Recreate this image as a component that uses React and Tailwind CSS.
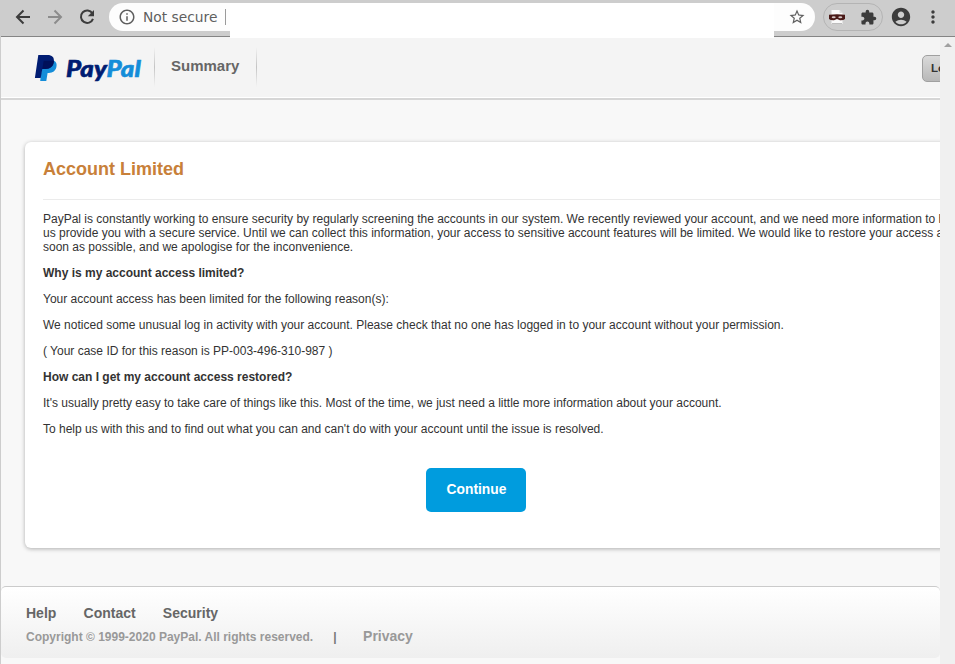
import {
  MdInfoOutline,
  MdStarBorder,
  MdExtension,
  MdAccountCircle,
  MdMoreVert,
} from "react-icons/md";

const details = [
  { text: "Why is my account access limited?", bold: true },
  { text: "Your account access has been limited for the following reason(s):" },
  {
    text: "We noticed some unusual log in activity with your account. Please check that no one has logged in to your account without your permission.",
  },
  { text: "( Your case ID for this reason is PP-003-496-310-987 )" },
  { text: "How can I get my account access restored?", bold: true },
  {
    text: "It's usually pretty easy to take care of things like this. Most of the time, we just need a little more information about your account.",
  },
  {
    text: "To help us with this and to find out what you can and can't do with your account until the issue is resolved.",
  },
];

const NavIcon = ({ d, className }) => (
  <svg
    width="16"
    height="16"
    viewBox="0 0 16 16"
    fill="none"
    stroke="currentColor"
    strokeWidth="2"
    className={`block shrink-0 ${className}`}
  >
    <path d={d} />
  </svg>
);

const MaskIcon = () => (
  <svg width="16" height="16" viewBox="0 0 16 16" className="block">
    <path d="M2.500 1h8L13.500 4v11h-11z" fill="#fafafa" />
    <path d="M10.500 1v3h3z" fill="#dcdcdc" />
    <path d="M3 14h10v1H3z" fill="#bdbdbd" />
    <path
      d="M0 5.700Q8 4.800 16 5.700V10Q14.500 11.500 11 11.300L8 10 5 11.300Q1.500 11.500 0 10z"
      fill="#4a1a18"
    />
    <ellipse cx="4.700" cy="8.300" rx="2" ry="1" fill="#d8c8c6" />
    <ellipse cx="11.300" cy="8.300" rx="2" ry="1" fill="#d8c8c6" />
  </svg>
);

const Logo = () => (
  <div className="flex w-[153px] shrink-0 items-start pl-[33px] pt-[17px]">
    <svg width="24" height="28" viewBox="0 0 24 28" className="block shrink-0">
      <path
        d="M8.500 6.500h11.300C22.500 8 23 10.300 22.400 13c-.9 4-3.600 5.900-7.500 5.900h-1.300l-1.300 8H6.200z"
        fill="#148dd9"
      />
      <path
        d="M4.300 1h9.200c4.500 0 7 2.200 6.300 6.500-.8 5-3.900 7.400-8.700 7.400H8.300L6.700 24H.9z"
        fill="#001c72"
      />
      <path d="M9.700 6.700h10.200c0 5.300-3.300 8.200-8.800 8.200H8.300z" fill="#00105a" />
    </svg>
    <span className="ml-[7.500px] origin-left scale-x-[1.12] font-['Lato',sans-serif] text-[23px] leading-[28px] font-black italic text-[#001c72] [-webkit-text-stroke:0.6px_currentColor]">
      Pay<span className="text-[#148dd9]">Pal</span>
    </span>
  </div>
);

const Divider = () => (
  <div className="mt-[10px] h-[40px] w-px bg-linear-to-b from-[#f4f4f4] via-[#c4c4c4] to-[#f4f4f4]" />
);

const Toolbar = () => (
  <div className="relative flex h-[36px] shrink-0 items-center bg-[#cdcdcd] pb-[2px] text-[#3c3c3c]">
    <NavIcon className="ml-[15px]" d="M15 8H2.500M8.500 1.500L2 8l6.500 6.500" />
    <NavIcon
      className="ml-[16px] text-[#8c8c8c]"
      d="M1 8h12.500M7.500 1.500L14 8l-6.500 6.500"
    />
    <svg width="16" height="16" viewBox="0 0 16 16" className="ml-[16px] block shrink-0">
      <path
        d="M13.400 4.400A6.200 6.200 0 1 0 14 9.800"
        fill="none"
        stroke="currentColor"
        strokeWidth="2"
      />
      <path d="M15 1v6.200H8.800z" fill="currentColor" />
    </svg>
    <div className="ml-[14px] flex h-[28px] w-[706px] items-center rounded-full bg-[#fdfdfd] pl-[9px] pr-[9px] text-[#5f5f5f]">
      <MdInfoOutline size={18} />
      <span className="ml-[7px] font-['DejaVu_Sans',sans-serif] text-[13.800px] leading-[20px]">
        Not secure
      </span>
      <span className="absolute left-[225px] h-[16px] w-px bg-[#9a9a9a]" />
      <MdStarBorder size={18} className="ml-auto" />
    </div>
    <div className="ml-[8px] flex h-[28px] w-[60px] items-center rounded-full border border-[#b4b4b4] pl-[5px]">
      <MaskIcon />
      <MdExtension size={17} className="ml-[15px]" />
    </div>
    <MdAccountCircle size={22} className="ml-[7px]" />
    <MdMoreVert size={20} className="ml-[11px]" />
    {/* blank cover over the address */}
    <div className="absolute left-[230px] top-[3px] z-10 h-[35px] w-[544px] bg-white" />
  </div>
);

const Header = () => (
  <header className="flex h-[63px] shrink-0 border-b-2 border-[#d6d6d6] bg-[#f4f4f4] shadow-[inset_0_-1px_0_#fff]">
    <Logo />
    <Divider />
    <span className="mx-[16px] mt-[19px] w-[69px] text-[15px] leading-[20px] font-bold text-[#666]">
      Summary
    </span>
    <Divider />
    <button
      type="button"
      className="-mr-[40px] ml-auto mt-[18px] h-[27px] w-[58px] shrink-0 rounded-[5px] border border-[#a0a0a0] bg-linear-to-b from-[#dadada] to-[#b8b8b8] pb-px pl-[8px] text-left text-[11.500px] font-bold text-[#333]"
    >
      Log out
    </button>
  </header>
);

const Card = () => (
  <section className="ml-[24px] mt-[42px] h-[406px] w-[940px] shrink-0 rounded-[6px] bg-white px-[18px] shadow-[0_1px_4px_rgba(0,0,0,0.3)]">
    <h1 className="h-[58px] border-b border-[#ebebeb] pt-[15px] text-[18px] leading-[24px] font-bold text-[#c88039]">
      Account Limited
    </h1>
    <p className="mt-[12px] whitespace-nowrap">
      PayPal is constantly working to ensure security by regularly screening the
      accounts in our system. We recently reviewed your account, and we need
      more information to help
      <br />
      us provide you with a secure service. Until we can collect this
      information, your access to sensitive account features will be limited. We
      would like to restore your access as
      <br />
      soon as possible, and we apologise for the inconvenience.
    </p>
    {details.map((item) => (
      <p
        key={item.text}
        className={`mt-[12px] whitespace-nowrap ${item.bold ? "font-bold" : ""}`}
      >
        {item.text}
      </p>
    ))}
    <button
      type="button"
      className="ml-[383px] mt-[32px] block h-[44px] w-[100px] rounded-[5px] bg-[#009cde] pl-px text-[13.800px] leading-[16px] font-bold text-white"
    >
      Continue
    </button>
  </section>
);

const Footer = () => (
  <footer className="mt-[38px] h-[72px] w-[939px] shrink-0 rounded-[5px] border-t border-[#cbcbcb] bg-linear-to-b from-white to-[#efefef] pl-[25px] pt-[17px] font-bold">
    <div className="flex gap-[27.200px] text-[14px] leading-[18px] text-[#666]">
      <span>Help</span>
      <span>Contact</span>
      <span>Security</span>
    </div>
    <div className="mt-[5px] flex items-baseline leading-[18px] text-[#999]">
      <span>Copyright © 1999-2020 PayPal. All rights reserved.</span>
      <span className="ml-[20px] text-[#777]">|</span>
      <span className="ml-[26.500px] text-[14px]">Privacy</span>
    </div>
  </footer>
);

const App = () => {
  return (
    <div className="flex h-[664px] w-[955px] flex-col overflow-hidden bg-[#cdcdcd] font-['Liberation_Sans',Arial,sans-serif] text-[12px] leading-[14px] text-[#333]">
      <Toolbar />
      <div className="ml-px h-px shrink-0 bg-[#858585]" />
      <div className="flex min-h-0 flex-1 pl-px">
        <main className="flex w-[939px] flex-col overflow-hidden bg-[#f8f8f8]">
          <Header />
          <Card />
          <Footer />
        </main>
        <div className="flex flex-1 justify-center bg-[#f0f0f0] pt-[6px]">
          <svg width="8" height="4" viewBox="0 0 8 4">
            <path d="M0 4l4-4 4 4z" fill="#a0a0a0" />
          </svg>
        </div>
      </div>
    </div>
  );
};

export default App;
